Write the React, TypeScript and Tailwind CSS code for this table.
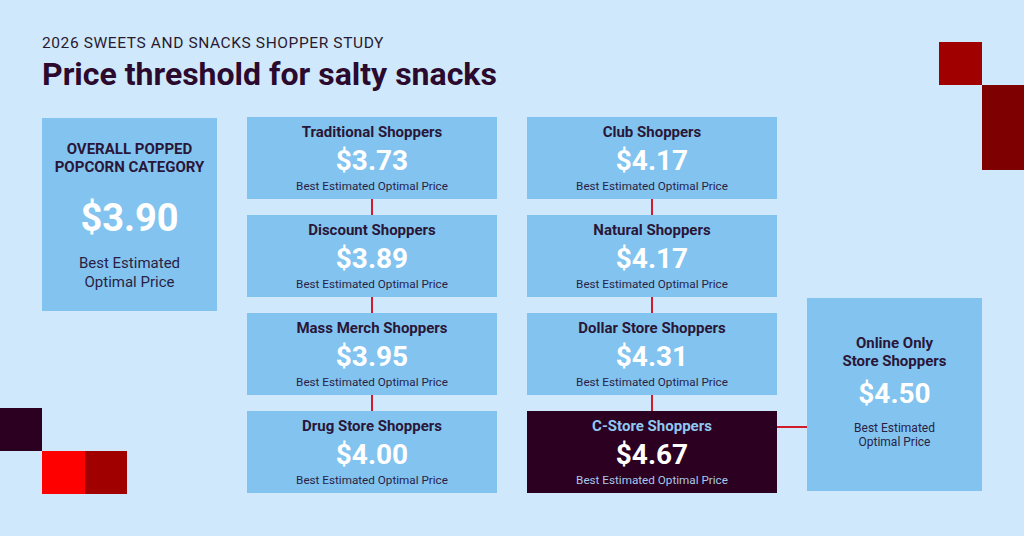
import React from "react";

type Tier = { name: string; price: string; dark?: boolean };

const LEFT_COLUMN: Tier[] = [
	{ name: "Traditional Shoppers", price: "$3.73" },
	{ name: "Discount Shoppers", price: "$3.89" },
	{ name: "Mass Merch Shoppers", price: "$3.95" },
	{ name: "Drug Store Shoppers", price: "$4.00" },
];

const RIGHT_COLUMN: Tier[] = [
	{ name: "Club Shoppers", price: "$4.17" },
	{ name: "Natural Shoppers", price: "$4.17" },
	{ name: "Dollar Store Shoppers", price: "$4.31" },
	{ name: "C-Store Shoppers", price: "$4.67", dark: true },
];

function TierCard({ tier }: { tier: Tier }) {
	return (
		<div
			className={`flex h-[82px] flex-col items-center justify-center ${
				tier.dark ? "bg-[#2b0021]" : "bg-[#82c4ef]"
			}`}
		>
			<div
				className={`text-[15px] font-bold leading-[18px] ${
					tier.dark ? "text-[#8fc9f1]" : "text-[#2a1638]"
				}`}
			>
				{tier.name}
			</div>
			<div className="mt-[4px] text-[28px] font-bold leading-[32px] text-white">{tier.price}</div>
			<div
				className={`mt-[2px] text-[11.7px] leading-[14px] ${
					tier.dark ? "text-[#a9c9ea]" : "text-[#2a1e45]"
				}`}
			>
				Best Estimated Optimal Price
			</div>
		</div>
	);
}

function TierColumn({ tiers }: { tiers: Tier[] }) {
	return (
		<div className="flex w-[250px] flex-col">
			{tiers.map((t, i) => (
				<React.Fragment key={t.name}>
					{i > 0 && <div className="mx-auto h-[16px] w-[2px] bg-[#d11c2c]" />}
					<TierCard tier={t} />
				</React.Fragment>
			))}
		</div>
	);
}

export default function App() {
	return (
		<main
			className="relative h-[536px] w-[1024px] overflow-hidden bg-[#cfe8fb]"
			style={{ fontFamily: "Roboto, 'Liberation Sans', sans-serif" }}
		>
			{/* decorative blocks */}
			<div className="absolute left-[939px] top-[42px] h-[43px] w-[43px] bg-[#a00000]" />
			<div className="absolute left-[982px] top-[85px] h-[85px] w-[42px] bg-[#7f0000]" />
			<div className="absolute left-0 top-[408px] h-[43px] w-[42px] bg-[#2b0021]" />
			<div className="absolute left-[42px] top-[451px] h-[43px] w-[43px] bg-[#ff0000]" />
			<div className="absolute left-[85px] top-[451px] h-[43px] w-[42px] bg-[#a00000]" />

			<div className="relative px-[42px] pt-[34px]">
				<div className="text-[15.5px] leading-[18px] tracking-[0.6px] text-[#2a1a30]">
					2026 SWEETS AND SNACKS SHOPPER STUDY
				</div>
				<h1 className="mt-[4px] text-[32px] font-bold leading-[36px] text-[#2b0a2e]">
					Price threshold for salty snacks
				</h1>

				<div className="mt-[25px] flex items-start gap-[30px]">
					{/* overall category */}
					<div className="mt-[1px] flex h-[193px] w-[175px] flex-col items-center justify-center bg-[#82c4ef] pt-[3px] text-center">
						<div className="text-[15px] font-bold uppercase leading-[18px] text-[#2a1638]">
							Overall Popped
							<br />
							Popcorn Category
						</div>
						<div className="mt-[20px] text-[38px] font-bold leading-[44px] text-white">$3.90</div>
						<div className="mt-[14px] text-[15px] leading-[19px] text-[#2a1e45]">
							Best Estimated
							<br />
							Optimal Price
						</div>
					</div>

					<TierColumn tiers={LEFT_COLUMN} />
					<TierColumn tiers={RIGHT_COLUMN} />

					{/* online only, linked to c-store */}
					<div className="relative mt-[181px] flex h-[193px] w-[175px] flex-col items-center justify-center bg-[#82c4ef] pb-[7px] text-center">
						<div className="absolute left-[-30px] top-[128px] h-[2px] w-[30px] bg-[#d11c2c]" />
						<div className="text-[15px] font-bold leading-[18px] text-[#2a1638]">
							Online Only
							<br />
							Store Shoppers
						</div>
						<div className="mt-[8px] text-[28px] font-bold leading-[32px] text-white">$4.50</div>
						<div className="mt-[11px] text-[12px] leading-[14px] text-[#2a1e45]">
							Best Estimated
							<br />
							Optimal Price
						</div>
					</div>
				</div>
			</div>
		</main>
	);
}
